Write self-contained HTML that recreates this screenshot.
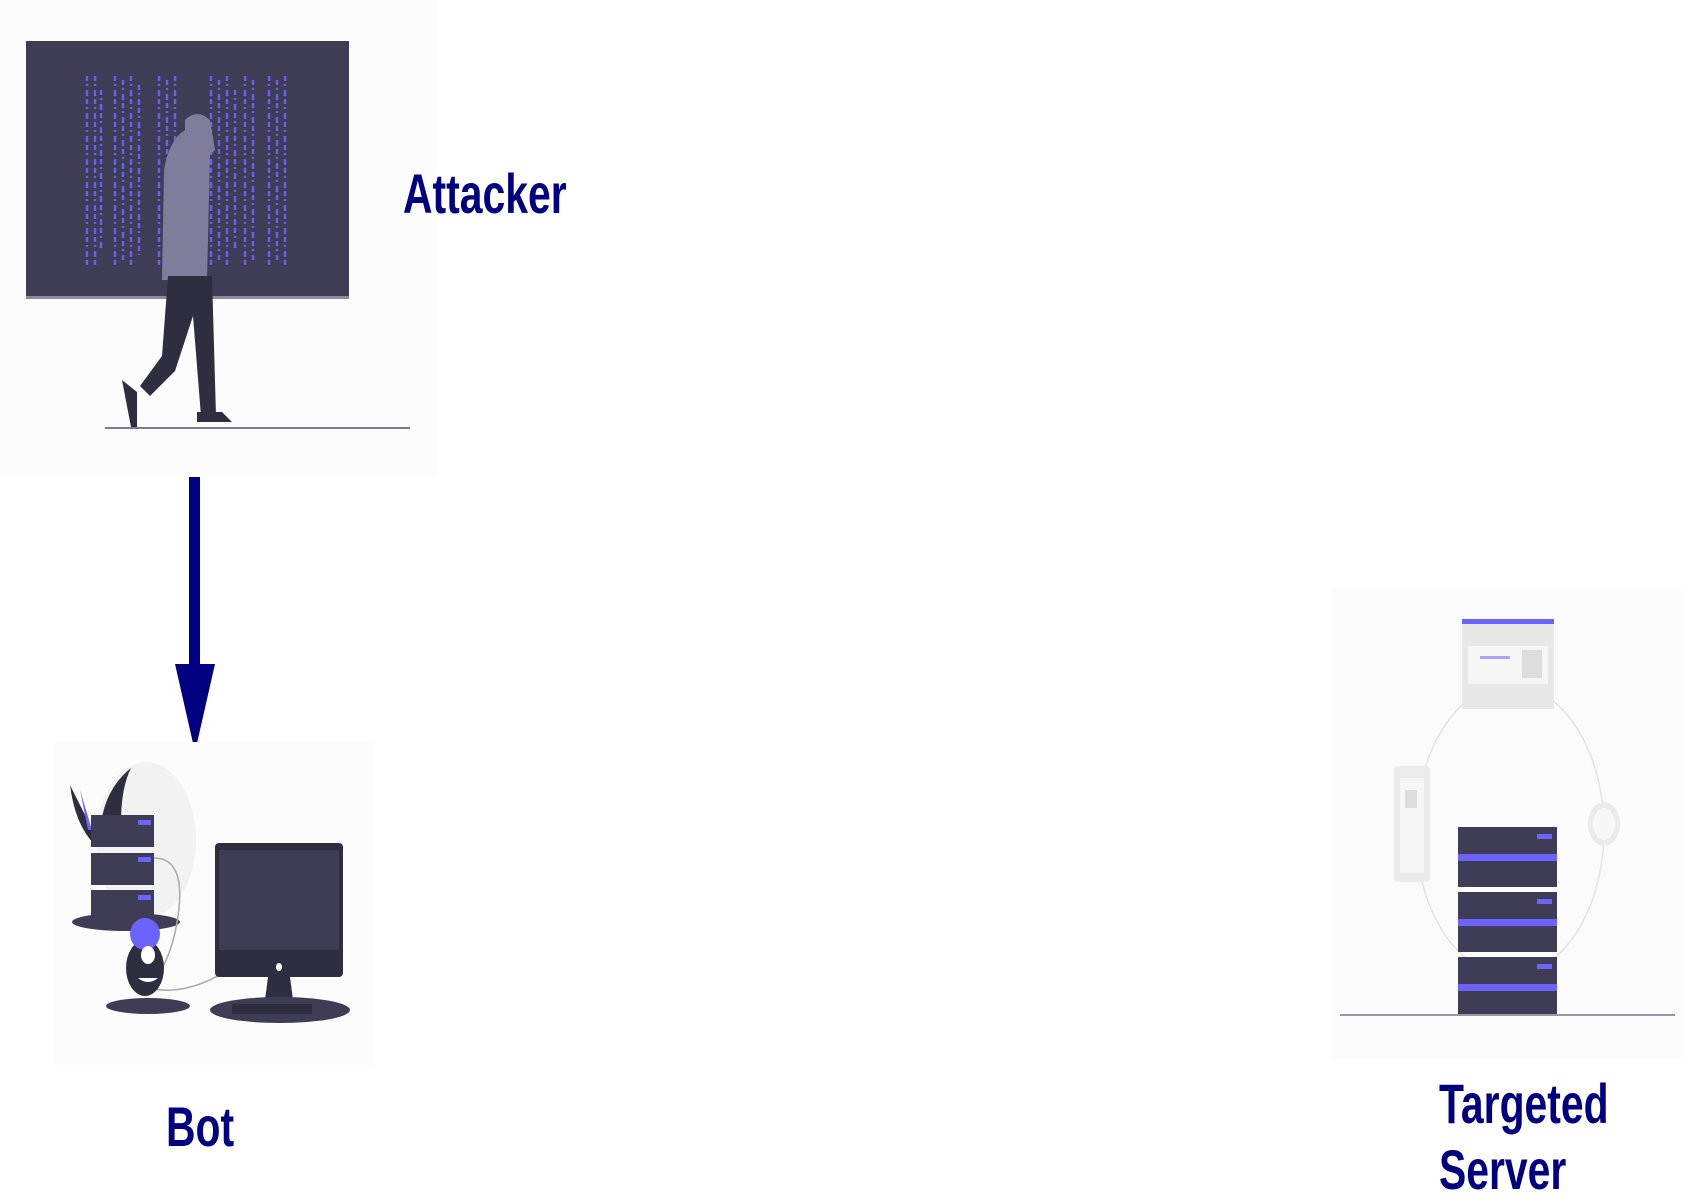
<!DOCTYPE html>
<html><head><meta charset="utf-8"><style>
html,body{margin:0;padding:0;background:#fff;width:1684px;height:1191px;overflow:hidden}
.lbl{position:absolute;font-family:"Liberation Sans",sans-serif;font-weight:bold;color:#000080;font-size:56px;line-height:1;white-space:nowrap;transform:scaleX(0.73);transform-origin:0 0}
</style></head><body>
<svg width="1684" height="1191" style="position:absolute;left:0;top:0">
<!-- attacker -->
<rect x="0" y="0" width="437" height="476" fill="#fcfcfc"/>
<rect x="26" y="41" width="323" height="257" fill="#3f3d56"/>
<rect x="26" y="296" width="323" height="3" fill="#8c8aa0"/>
<g stroke="#6c63ff" stroke-width="2.5" stroke-dasharray="5 3 2 4 6 3" opacity="0.9">
<path d="M87 76v190M95 76v190M101 90v160M115 76v190M123 80v180M131 76v190M139 85v170M159 76v190M167 80v180M175 76v190M211 76v190M219 80v180M227 76v190M235 90v160M245 76v190M253 80v180M269 76v190M277 80v180M285 76v190"/>
</g>
<path d="M185 120 q12-12 25 0 l5 30 l-5 5 l-3 125 l-45 0 l2-110 q5-30 21-40z" fill="#807d9c"/>
<path d="M168 276 l44 0 l4 140 l-15 0 l-8-100 l-18 55 l-25 25 l-10-10 l22-30 z" fill="#2f2e41"/>
<path d="M122 380 l15 12 l0 35 l-6 0 z" fill="#2f2e41"/><path d="M197 412 l25 0 l10 10 l-35 0z" fill="#2f2e41"/>
<rect x="105" y="427" width="305" height="2" fill="#7d7b91"/>
<!-- arrow -->
<rect x="189" y="477" width="11" height="190" fill="#000080"/>
<path d="M175 664 L215 664 L195 752 Z" fill="#000080"/>
<!-- bot -->
<rect x="54" y="742" width="320" height="323" fill="#fcfcfc"/>
<ellipse cx="146" cy="840" rx="50" ry="78" fill="#f2f2f2"/>
<path d="M70 785 q5 40 25 60 l0-10z" fill="#2f2e41"/><path d="M80 790 l12 40 l-4 0z" fill="#6c63ff"/>
<path d="M131 768 q-25 20 -30 55 l20 0 q0-35 10-55z" fill="#2f2e41"/>
<ellipse cx="126" cy="922" rx="54" ry="9" fill="#3f3d56"/>
<g fill="#3f3d56"><rect x="91" y="815" width="63" height="32"/><rect x="91" y="853" width="63" height="32"/><rect x="91" y="890" width="63" height="32"/></g>
<g fill="#6c63ff"><rect x="138" y="820" width="13" height="5"/><rect x="138" y="857" width="13" height="5"/><rect x="138" y="895" width="13" height="5"/></g>
<path d="M154 858 q30 0 25 50 q-5 50 -30 80 q40 10 90-25" stroke="#aaa" stroke-width="1.5" fill="none"/>
<ellipse cx="148" cy="1006" rx="42" ry="8" fill="#3f3d56"/>
<ellipse cx="145" cy="968" rx="19" ry="28" fill="#2f2e41"/>
<ellipse cx="145" cy="934" rx="15" ry="16" fill="#6c63ff"/>
<ellipse cx="148" cy="955" rx="7" ry="9" fill="#fff"/><path d="M138 978 q10 8 20 0z" fill="#fff"/>
<rect x="215" y="843" width="128" height="134" rx="4" fill="#2f2e41"/>
<rect x="219" y="850" width="120" height="100" fill="#3f3d56"/>
<ellipse cx="279" cy="967" rx="3" ry="4" fill="#fff"/>
<path d="M268 977 l22 0 l3 23 l-28 0z" fill="#2f2e41"/>
<ellipse cx="280" cy="1010" rx="70" ry="13" fill="#3f3d56"/>
<rect x="232" y="1004" width="80" height="10" fill="#2f2e41"/>
<!-- server -->
<rect x="1332" y="589" width="352" height="469" fill="#fbfbfb"/>
<ellipse cx="1510" cy="830" rx="94" ry="145" fill="none" stroke="#e3e3e3" stroke-width="1.5"/>
<rect x="1462" y="619" width="92" height="90" fill="#e8e8e8"/>
<rect x="1462" y="619" width="92" height="5" fill="#6c63ff"/>
<rect x="1468" y="646" width="80" height="38" fill="#f6f6f6"/><rect x="1522" y="650" width="20" height="28" fill="#ddd"/>
<rect x="1480" y="656" width="30" height="3" fill="#a9a5ff"/>
<rect x="1394" y="766" width="36" height="116" rx="4" fill="#ebebeb"/>
<rect x="1400" y="778" width="24" height="95" fill="#f6f6f6"/><rect x="1405" y="790" width="12" height="18" fill="#ddd"/>
<ellipse cx="1604" cy="824" rx="16" ry="22" fill="#ebebeb"/><ellipse cx="1604" cy="824" rx="11" ry="16" fill="#f7f7f7"/>
<g fill="#3f3d56"><rect x="1458" y="827" width="99" height="60"/><rect x="1458" y="892" width="99" height="60"/><rect x="1458" y="957" width="99" height="58"/></g>
<g fill="#6c63ff"><rect x="1458" y="854" width="99" height="7"/><rect x="1458" y="919" width="99" height="7"/><rect x="1458" y="984" width="99" height="7"/>
<rect x="1537" y="834" width="15" height="5"/><rect x="1537" y="899" width="15" height="5"/><rect x="1537" y="964" width="15" height="5"/></g>
<rect x="1340" y="1014" width="335" height="2" fill="#9a98ab"/>
</svg>
<div class="lbl" style="left:403px;top:166px">Attacker</div>
<div class="lbl" style="left:166px;top:1099px">Bot</div>
<div class="lbl" style="left:1439px;top:1076px">Targeted</div>
<div class="lbl" style="left:1439px;top:1142px">Server</div>
</body></html>
